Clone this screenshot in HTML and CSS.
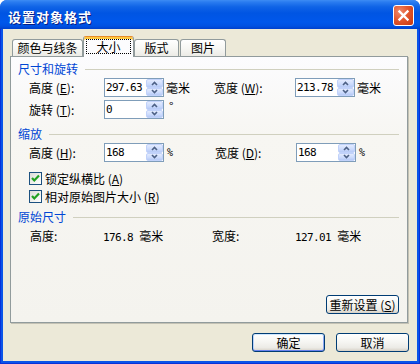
FILE: index.html
```html
<!DOCTYPE html>
<html>
<head>
<meta charset="utf-8">
<link rel="stylesheet" href="styles.css">
</head>
<body>
<div class="window">
  <div class="titlebar">
    <span class="title">设置对象格式</span>
    <span class="close"><svg width="19" height="19" viewBox="0 0 19 19"><path d="M5.5 5.5 L13.5 13.5 M13.5 5.5 L5.5 13.5" stroke="#fff" stroke-width="2.4" stroke-linecap="square"/></svg></span>
  </div>
  <div class="frame">
    <div class="client">
      <div class="tabs">
        <div class="tab t1">颜色与线条</div>
        <div class="tab t2 active"><span class="focus">大小</span></div>
        <div class="tab t3">版式</div>
        <div class="tab t4">图片</div>
      </div>
      <div class="panel">
        <div class="section s1"><span>尺寸和旋转</span><i class="rule"></i></div>
        <div class="row r1">
          <span class="lbl">高度 (<u>E</u>):</span>
          <div class="spin"><span class="val">297.63</span><span class="btns"><b><svg width="7" height="5" viewBox="0 0 7 5"><path d="M1 4 L3.5 1.5 L6 4" fill="none" stroke="#4D6185" stroke-width="1.6"/></svg></b><b><svg width="7" height="5" viewBox="0 0 7 5"><path d="M1 1 L3.5 3.5 L6 1" fill="none" stroke="#4D6185" stroke-width="1.6"/></svg></b></span></div>
          <span class="unit">毫米</span>
          <span class="lbl lbl2">宽度 (<u>W</u>):</span>
          <div class="spin"><span class="val">213.78</span><span class="btns"><b><svg width="7" height="5" viewBox="0 0 7 5"><path d="M1 4 L3.5 1.5 L6 4" fill="none" stroke="#4D6185" stroke-width="1.6"/></svg></b><b><svg width="7" height="5" viewBox="0 0 7 5"><path d="M1 1 L3.5 3.5 L6 1" fill="none" stroke="#4D6185" stroke-width="1.6"/></svg></b></span></div>
          <span class="unit">毫米</span>
        </div>
        <div class="row r2">
          <span class="lbl">旋转 (<u>T</u>):</span>
          <div class="spin"><span class="val">0</span><span class="btns"><b><svg width="7" height="5" viewBox="0 0 7 5"><path d="M1 4 L3.5 1.5 L6 4" fill="none" stroke="#4D6185" stroke-width="1.6"/></svg></b><b><svg width="7" height="5" viewBox="0 0 7 5"><path d="M1 1 L3.5 3.5 L6 1" fill="none" stroke="#4D6185" stroke-width="1.6"/></svg></b></span></div>
          <span class="unit deg">°</span>
        </div>
        <div class="section s2"><span>缩放</span><i class="rule"></i></div>
        <div class="row r3">
          <span class="lbl">高度 (<u>H</u>):</span>
          <div class="spin"><span class="val">168</span><span class="btns"><b><svg width="7" height="5" viewBox="0 0 7 5"><path d="M1 4 L3.5 1.5 L6 4" fill="none" stroke="#4D6185" stroke-width="1.6"/></svg></b><b><svg width="7" height="5" viewBox="0 0 7 5"><path d="M1 1 L3.5 3.5 L6 1" fill="none" stroke="#4D6185" stroke-width="1.6"/></svg></b></span></div>
          <span class="unit pct">%</span>
          <span class="lbl lbl2">宽度 (<u>D</u>):</span>
          <div class="spin"><span class="val">168</span><span class="btns"><b><svg width="7" height="5" viewBox="0 0 7 5"><path d="M1 4 L3.5 1.5 L6 4" fill="none" stroke="#4D6185" stroke-width="1.6"/></svg></b><b><svg width="7" height="5" viewBox="0 0 7 5"><path d="M1 1 L3.5 3.5 L6 1" fill="none" stroke="#4D6185" stroke-width="1.6"/></svg></b></span></div>
          <span class="unit pct">%</span>
        </div>
        <div class="crow c1"><span class="cb"><svg width="11" height="11" viewBox="0 0 11 11"><path d="M2 5 L4.3 7.5 L9 2.5" fill="none" stroke="#21A121" stroke-width="2.2"/></svg></span><span>锁定纵横比 (<u>A</u>)</span></div>
        <div class="crow c2"><span class="cb"><svg width="11" height="11" viewBox="0 0 11 11"><path d="M2 5 L4.3 7.5 L9 2.5" fill="none" stroke="#21A121" stroke-width="2.2"/></svg></span><span>相对原始图片大小 (<u>R</u>)</span></div>
        <div class="section s3"><span>原始尺寸</span><i class="rule"></i></div>
        <div class="trow">
          <span class="tl">高度:</span>
          <span class="tv"><span class="num">176.8 </span>毫米</span>
          <span class="tl tl2">宽度:</span>
          <span class="tv"><span class="num">127.01 </span>毫米</span>
        </div>
        <div class="resetbar"><span class="btn">重新设置 (<u>S</u>)</span></div>
      </div>
      <div class="footer">
        <span class="btn default">确定</span>
        <span class="btn">取消</span>
      </div>
    </div>
  </div>
</div>
</body>
</html>
```

FILE: styles.css
```css
* { box-sizing: border-box; margin: 0; padding: 0; }
html, body { width: 420px; height: 364px; overflow: hidden; background: #fff; }
body { font-family: "Noto Sans CJK SC", "DejaVu Sans", sans-serif; font-size: 12px; color: #000; }
u { text-decoration: underline; }

.window {
  width: 420px; height: 364px;
  display: flex; flex-direction: column;
  background: #0A54E8;
  border-radius: 7px 7px 0 0;
  overflow: hidden;
}
.titlebar {
  height: 29px; flex: none;
  display: flex; justify-content: space-between; align-items: flex-start;
  padding: 0 6px 0 8px;
  background: linear-gradient(180deg, #3D8CF4 0px, #2A7CF0 2px, #0F63E6 7px, #0055E3 13px, #0057EB 22px, #0051E2 26px, #0040CC 29px);
}
.title {
  color: #fff; font-weight: bold; font-size: 13px; letter-spacing: 1px;
  line-height: 29px; padding-top: 2px;
  text-shadow: 1px 1px 0 #0A1E83;
}
.close {
  margin-top: 5px; width: 21px; height: 21px;
  border: 1px solid #fff; border-radius: 3px;
  background: radial-gradient(circle at 30% 30%, #EE8A6C 0%, #E2582F 45%, #C8350E 100%);
  display: flex; align-items: center; justify-content: center;
}
.frame {
  flex: 1; display: flex;
  padding: 0 4px 3px 3px;
  background: #0A54E8;
  box-shadow: inset 1px 0 #0831D9, inset -1px 0 #0831D9, inset 0 -1px #0831D9;
}
.client {
  flex: 1; display: flex; flex-direction: column;
  background: #ECE9D8;
}

.tabs { display: flex; height: 20px; margin: 7px 0 0 9px; position: relative; z-index: 2; }
.tab {
  height: 17px; margin-top: 3px;
  border: 1px solid #919B9C; border-bottom: none;
  border-radius: 3px 3px 0 0;
  background: linear-gradient(#FFFFFF 0%, #F7F7F4 50%, #ECEBE6 100%);
  text-align: center; line-height: 15px;
}
.t1 { width: 71px; }
.t2 { width: 51px; }
.t3 { width: 45px; }
.t4 { width: 46px; margin-left: 1px; }
.tab.active {
  height: 21px; margin-top: 0;
  border-top: 1px solid #E68B2C;
  background: #FCFCFE;
  box-shadow: inset 0 2px 0 #FFC73C;
  padding-top: 2px;
  line-height: 14px;
}
.focus { display: inline-block; border: 1px dotted #000; width: 45px; height: 15px; line-height: 13px; }

.panel {
  height: 267px; flex: none;
  margin: 0 9px 0 7px;
  border: 1px solid #919B9C;
  background: linear-gradient(#FCFCFE 0%, #F7F6F2 30%, #F4F3EE 100%);
  box-shadow: 1px 1px 0 #C3C1B4;
  display: flex; flex-direction: column;
  padding-bottom: 8px;
}
.section {
  display: flex; align-items: center;
  height: 14px; line-height: 14px;
  padding: 0 8px 0 7px;
  color: #0046D5;
}
.rule { flex: 1; height: 1px; background: #D0D0BF; margin-left: 7px; }
.s1 { margin-top: 5px; }
.s2 { margin-top: 8px; }
.s3 { margin-top: 6px; }

.row { display: flex; align-items: center; height: 19px; padding-left: 18px; }
.r1 { margin-top: 2px; }
.r2 { margin-top: 3px; }
.r3 { margin-top: 2px; }
.lbl { width: 75px; white-space: nowrap; }
.lbl2 { width: 81px; }
.unit { width: 48px; margin-left: 2px; }
.deg { margin-left: 5px; align-self: flex-start; line-height: 12px; }
.pct { font-family: "DejaVu Sans Mono", monospace; font-size: 10px; margin-left: 3px; }

.spin {
  width: 60px; height: 19px; flex: none;
  display: flex;
  border: 1px solid #7F9DB9; background: #fff;
}
.val {
  flex: 1; padding-left: 1px;
  font-family: "DejaVu Sans Mono", monospace; font-size: 11px; letter-spacing: -0.6px; line-height: 17px;
}
.btns { width: 17px; display: flex; flex-direction: column; }
.btns b {
  flex: 1; display: flex; align-items: center; justify-content: center;
  background: linear-gradient(#E3EBFE 0%, #CBDAFC 60%, #B6CAF6 100%);
  border: 1px solid #C1D2FA; border-radius: 2px;
}

.crow { display: flex; align-items: center; height: 15px; padding-left: 18px; gap: 3px; }
.c1 { margin-top: 9px; }
.c2 { margin-top: 3px; }
.cb {
  width: 13px; height: 13px; flex: none;
  border: 1px solid #1C5180;
  background: linear-gradient(135deg, #DCDCD7 0%, #F2F2EF 60%, #FFFFFF 100%);
  display: flex; align-items: center; justify-content: center;
}

.trow { display: flex; align-items: center; height: 14px; margin-top: 4px; padding-left: 19px; }
.tl { width: 73px; }
.tl2 { width: 83px; }
.tv { width: 109px; white-space: pre; }
.trow .tv:last-child { width: auto; }
.num { font-family: "DejaVu Sans Mono", monospace; font-size: 11px; letter-spacing: -0.6px; }

.resetbar { margin-top: auto; display: flex; justify-content: flex-end; padding-right: 8px; }
.btn {
  display: inline-block; width: 73px; height: 19px;
  border: 1px solid #003C74; border-radius: 3px;
  background: linear-gradient(#FFFFFF 0%, #F6F6F3 45%, #ECEBE6 80%, #D6D0C5 100%);
  text-align: center; line-height: 17px;
}
.btn.default { box-shadow: inset 0 1px 0 #CEE7FF, inset 0 -1px 0 #6982EE, inset 1px 0 0 #B9D1FA, inset -1px 0 0 #8DA7F0; }
.footer { display: flex; justify-content: flex-end; gap: 11px; margin-top: 10px; padding-right: 8px; }
```
